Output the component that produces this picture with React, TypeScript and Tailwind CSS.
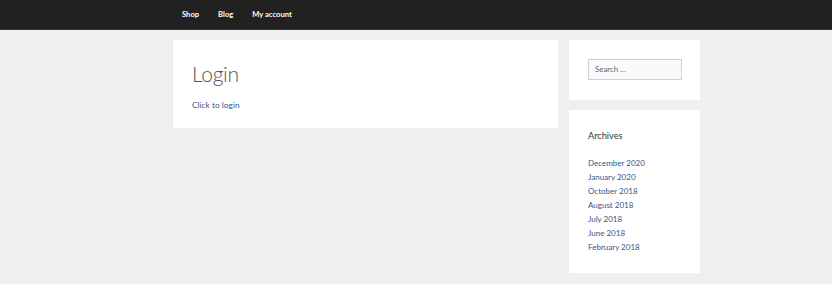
import React from 'react'

const archives = [
  'December 2020',
  'January 2020',
  'October 2018',
  'August 2018',
  'July 2018',
  'June 2018',
  'February 2018',
]

export default function App() {
  return (
    <div className="w-[832px] h-[290px] bg-white font-['Lato',sans-serif]">
      {/* Top nav */}
      <header className="h-[30px] bg-[#212121] border-b border-[#3a3a3a]">
        <nav className="flex items-center h-full pl-[182px] gap-[19px] text-[7.6px] font-bold text-white">
          <a href="#">Shop</a>
          <a href="#">Blog</a>
          <a href="#">My account</a>
        </nav>
      </header>

      {/* Page body */}
      <div className="bg-[#efefef] h-[254px] pt-[10px]">
        <div className="flex items-start gap-[11px] ml-[173px]">
          {/* Main */}
          <main className="w-[385px] h-[88px] bg-white px-[19px] pt-[19px]">
            <h1 className="text-[21px] font-light text-[#555] leading-[30px] tracking-[-0.3px]">Login</h1>
            <a href="#" className="block mt-[10px] text-[8.4px] text-[#34568b] leading-[12px]">
              Click to login
            </a>
          </main>

          {/* Sidebar */}
          <aside className="w-[131px] flex flex-col gap-[10px]">
            <div className="bg-white h-[60px] px-[19px] pt-[19px]">
              <div className="w-[94px] h-[21px] border border-[#cfcfcf] bg-[#fafafa] flex items-center px-[6px] text-[7.9px] text-[#666]">
                Search ...
              </div>
            </div>
            <div className="bg-white h-[163px] px-[19px] pt-[19px]">
              <h2 className="text-[9.2px] text-[#333] leading-[14px]">Archives</h2>
              <ul className="mt-[13px] text-[8px] leading-[14px] text-[#34568b]">
                {archives.map((a) => (
                  <li key={a}>
                    <a href="#">{a}</a>
                  </li>
                ))}
              </ul>
            </div>
          </aside>
        </div>
      </div>
    </div>
  )
}
